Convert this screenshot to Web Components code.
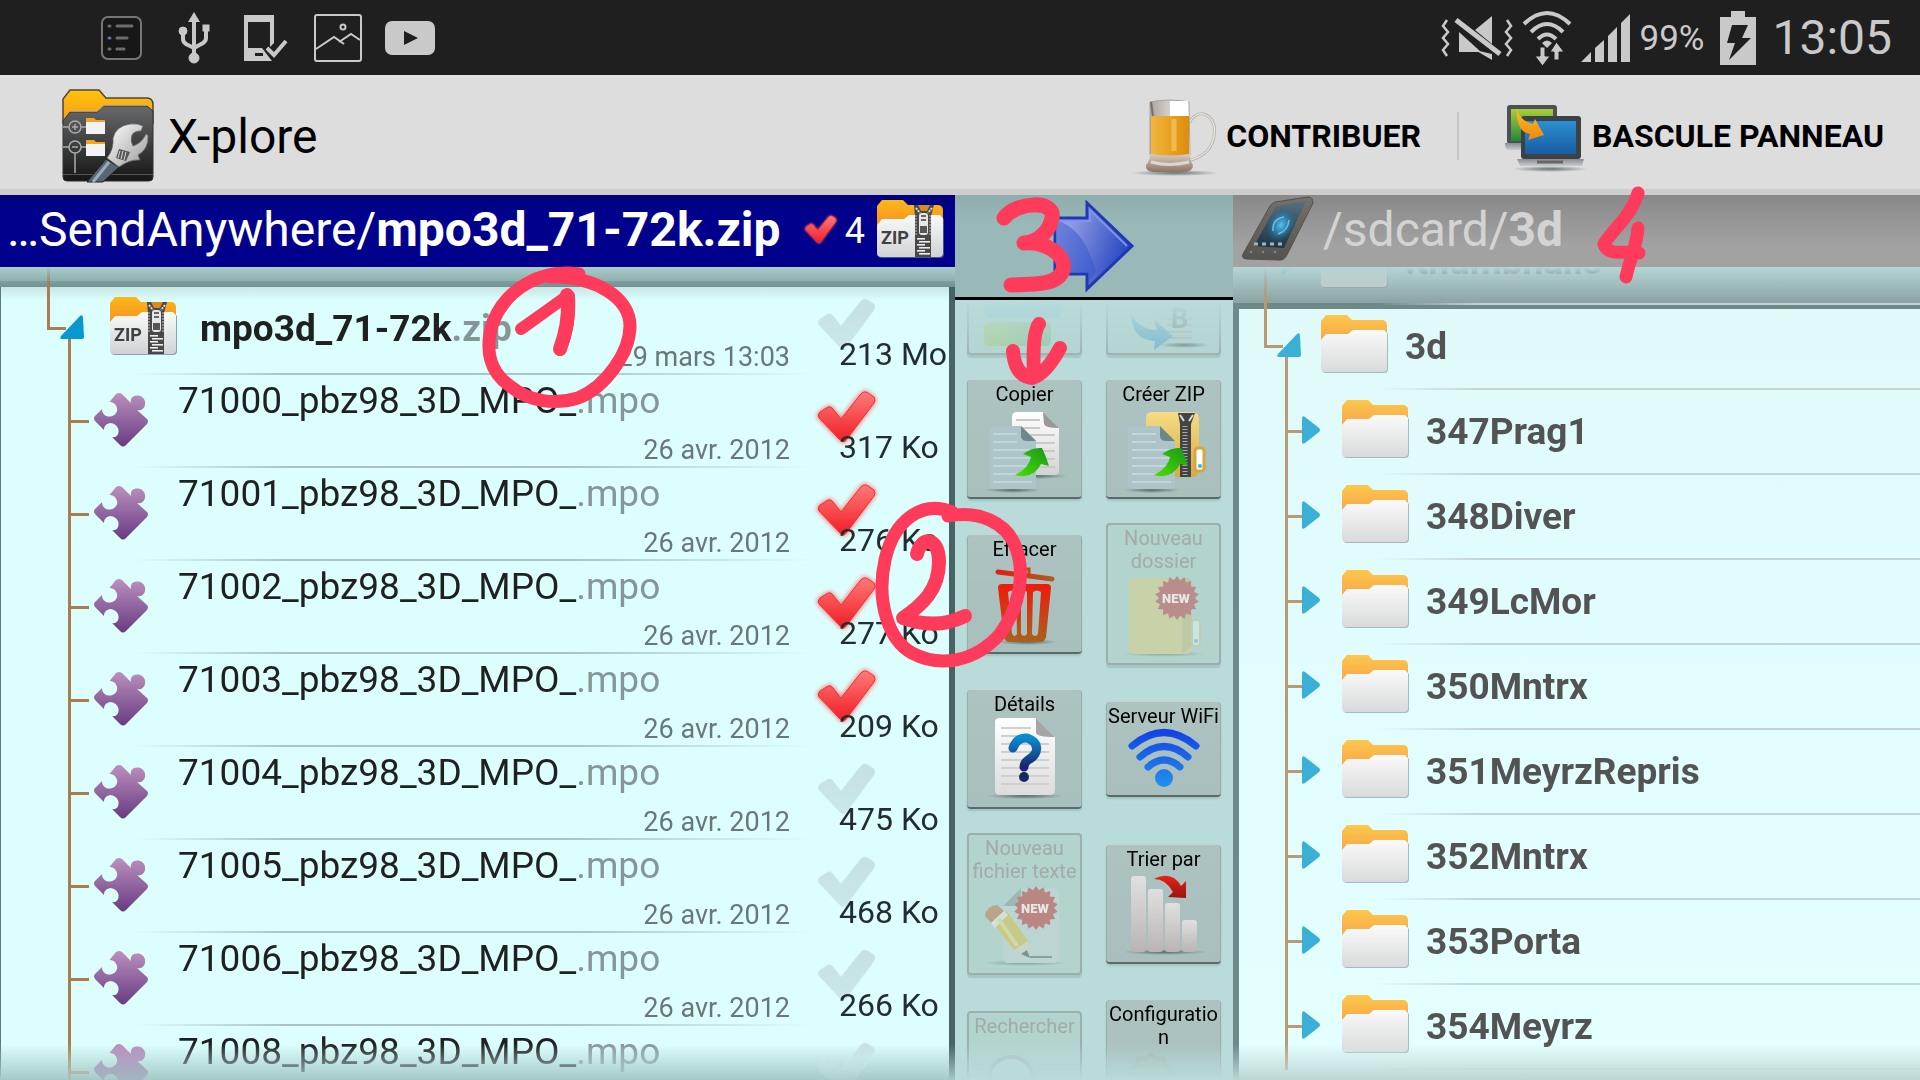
<!DOCTYPE html>
<html lang="fr">
<head>
<meta charset="utf-8">
<title>X-plore</title>
<style>
html,body{margin:0;height:100%}
body{font-family:Roboto,"Liberation Sans",sans-serif;overflow:hidden;background:#b9dcda}
</style>
</head>
<body>
<xp-app></xp-app>
<script>
const FOLDER_BACK='M0 26V6L5 0H26L31 5H62Q66 6 66 10V26Z';
const FOLDER_FRONT='M0 25L5 19H27L32 15H63L66 18V53Q66 57 62 57H4Q0 57 0 53Z';
const grad=(id,a,b,extra='x1="0" y1="0" x2="0" y2="1"')=>`<linearGradient id="${id}" ${extra}><stop offset="0" stop-color="${a}"/><stop offset="1" stop-color="${b}"/></linearGradient>`;
const starburst=(cx,cy,r1,r2,n)=>{let p='';for(let i=0;i<n*2;i++){const r=i%2?r2:r1,a=Math.PI*i/n;p+=(i?'L':'M')+(cx+r*Math.sin(a)).toFixed(1)+' '+(cy-r*Math.cos(a)).toFixed(1);}return p+'Z';};
const lines=(x,y,w,n,step,c)=>Array.from({length:n},(_,i)=>`<rect x="${x}" y="${y+i*step}" width="${w}" height="2" fill="${c}"/>`).join('');
const teeth=(y0,n,w1,w2,x)=>Array.from({length:n},(_,i)=>`<rect x="${i%2?x+2:x}" y="${y0+i*3}" width="${i%2?w2:w1}" height="1.6" fill="#eee"/>`).join('');
const shadow=(cx,cy,rx)=>`<ellipse cx="${cx}" cy="${cy}" rx="${rx}" ry="3" fill="url(#sh)"/>`;
const shDef='<radialGradient id="sh"><stop offset="0" stop-color="#3a5050" stop-opacity=".75"/><stop offset="1" stop-color="#3a5050" stop-opacity="0"/></radialGradient>';
const CHECK='M5 29Q3 26 6 23L14 18Q17 17 19 20L27 30L46 6Q50 1 54 4L60 8Q62 11 60 14L33 50Q30 55 26 51Z';
const copySheet=`<path d="M4 20Q4 16 8 16H36L51 31V75Q51 79 47 79H8Q4 79 4 75Z" fill="#adc4c8"/><path d="M36 16V27Q37 31 42 31H51Z" fill="#6e8889"/>${lines(8,23,24,2,8,'#c2d5d9')}${lines(8,39,39,5,8,'#c2d5d9')}`;
const greenArrow='<path d="M30 65Q44 58 46 47L38 44Q47 37 57 38Q61 46 64 56L56 54Q48 70 30 65Z" fill="url(#ga)"/>';
const ICONS={
list:[48,48,`<rect x="4" y="3" width="39" height="42" rx="6" fill="#171717" stroke="#777" stroke-width="2"/><g stroke="#6c6c6c" stroke-width="3" stroke-linecap="round"><path d="M19 12H34M19 24H29M19 35H26M11 12h1M11 35h1"/><path d="M11 24h1" stroke="#5577a5"/></g>`],
usb:[34,54,`<g fill="#c9c9c9" stroke="#c9c9c9"><path d="M17 1L23 11H11Z" stroke="none"/><path d="M17 10V46M6 20V28Q6 31 9 33L17 37M29 18V27Q29 30 26 32L17 37" fill="none" stroke-width="4"/><circle cx="6" cy="20" r="4"/><rect x="26" y="14" width="6" height="6"/><circle cx="17" cy="47" r="5"/></g>`],
phonecheck:[44,48,`<path d="M0 1H30V29L26 33V8H4V34H18L28 47H0Z" fill="#c9c9c9"/><rect x="11" y="39" width="8" height="3" fill="#1f1f1f"/><path d="M23 34L30 41L42 27" fill="none" stroke="#c9c9c9" stroke-width="4"/>`],
picture:[50,50,`<g fill="none" stroke="#c9c9c9" stroke-width="2"><rect x="2" y="2" width="46" height="46" rx="2"/><circle cx="30" cy="14" r="2.500"/><path d="M3 36L21 24L31 31M26 29L38 21L47 27"/></g>`],
youtube:[52,36,`<rect x="1" y="1" width="50" height="34" rx="7" fill="#c9c9c9"/><path d="M20 11V25L34 18Z" fill="#1f1f1f"/>`],
mute:[72,48,`<g fill="#c9c9c9"><path d="M18 18L40 38H28V38H18ZM34 16L51 2V30ZM34 36L51 40V46Z"/></g><path d="M15 6L59 40" stroke="#c9c9c9" stroke-width="5"/><path d="M6 6L2 12L7 18L2 24L7 30L2 36L6 42M66 6L70 12L65 18L70 24L65 30L70 36L66 42" fill="none" stroke="#c9c9c9" stroke-width="2.500"/>`],
wifiup:[52,56,`<g fill="none" stroke="#c9c9c9" stroke-width="4"><path d="M3 14Q26 -8 49 14"/><path d="M10 22Q26 6 42 22"/><path d="M17 29Q26 20 35 29"/></g><path d="M21 33Q26 28 31 33L26 38Z" fill="#c9c9c9"/><path d="M19 37h5v9h5L21.500 56L14 46h5ZM33 50h5V42h5L35.500 32L29 42h4Z" fill="#c9c9c9" stroke="#1f1f1f" stroke-width="1"/>`],
signal:[50,50,`<g fill="#c9c9c9"><path d="M0 49L10 39V49ZM14 49V35L23 27V49ZM27 49V23L36 14V49ZM40 49V10L49 1V49Z"/></g>`],
battery:[36,54,`<path d="M11 0H25V6H36V54H0V6H11Z" fill="#c9c9c9"/><path d="M12 14H28L22 27H31L9 49L15 32H7Z" fill="#1f1f1f"/>`],
app:[92,94,`<defs>${grad('o','#ffc40a','#f89a1c')}${grad('d','#67696b','#151515')}${grad('w','#fff','#9a9a9a','x1="0" y1="0" x2="1" y2="1"')}</defs><path d="M1 34V10L8 1H37L44 9H85Q91 9 91 16V34Z" fill="url(#o)" stroke="#49463f" stroke-width="1.500"/><path d="M1 32L8 23H35L42 17H85L91 22V88Q91 92 87 92H5Q1 92 1 88Z" fill="url(#d)" stroke="#333"/><path d="M8 22.500H35L42 16.500H85" fill="none" stroke="#999"/><g fill="none" stroke="#aaa" stroke-width="1.500"><circle cx="13" cy="38" r="6"/><circle cx="13" cy="58" r="6"/><path d="M1 38H7M19 38H24M1 58H7M19 58H24M13 64V84M10 38H16M13 35V41M10 58H16"/></g><path d="M1 85.500H91" stroke="#555"/><g><path d="M24 29h8l2 2h9v5H24zM24 51h8l2 2h9v5H24z" fill="#f8a320"/><path d="M24 33h19v12H24zM24 55h19v12H24z" fill="#f3f3f3"/></g><path d="M44 70L57 78L41 93H25Z" fill="#596575" stroke="#222"/><path d="M47 73L31 93" stroke="#9cabb8" stroke-width="3"/><path d="M45 69Q52 60 51 49Q54 37 68 35Q76 34 81 37L79 42Q72 42 70 46Q68 52 71 57Q80 54 84 45L86 46Q87 60 76 66L78 71Q68 70 57 78Z" fill="url(#w)" stroke="#666" stroke-width=".8"/><path d="M57 60L68 63L64 72L54 69Z" fill="#555"/><path d="M58 62L56 69M61 62L59 70M64 63L62 71" stroke="#ddd"/>`],
beer:[86,78,`<defs>${shDef}${grad('b','#f2b63c','#dc8d0c','x1="0" y1="0" x2="1" y2="0"')}${grad('g','#a9a49f','#fff','x1="0" y1="0" x2="1" y2="0"')}${grad('k','#d8cdc4','#8d7362')}</defs>${shadow(42,74,44)}<path d="M56 24Q62 13 71 15Q84 20 81 38Q78 55 58 61" fill="none" stroke="#bdb8b4" stroke-width="3"/><path d="M56 24Q62 13 71 15Q84 20 81 38Q78 55 58 61" fill="none" stroke="#f4f3f2" stroke-width="1"/><path d="M17 3Q36 -1 56 3L57 56H17Z" fill="url(#g)" stroke="#a8a39e"/><path d="M17 55H57Q57 62 60 66Q60 72 52 73H20Q12 72 13 66Q17 62 17 55Z" fill="url(#k)"/><path d="M18 17H56V55Q36 58 18 55Z" fill="url(#b)"/><path d="M18 3L20 17" stroke="#776f68" stroke-width="2"/><path d="M37 2H55V17H37Z" fill="#fff"/><path d="M41 20V52" stroke="#f9cf68" stroke-width="5" opacity=".6"/><path d="M18 63Q36 68 56 63" fill="none" stroke="#f3eeea" stroke-width="3" opacity=".7"/>`],
panels:[80,68,`<defs>${shDef}${grad('g','#a8cf3b','#24883c')}${grad('b','#2b8fd2','#195ca3')}${grad('o','#fbbf24','#f0850f')}${grad('m','#8a8d90','#c9cbcd')}</defs>${shadow(45,65,38)}<rect x="2" y="1" width="50" height="39" rx="3" fill="#4c5054"/><rect x="6" y="5" width="42" height="32" fill="url(#g)"/><path d="M0 39H20V46H3Q0 45 0 39Z" fill="url(#m)"/><rect x="16" y="12" width="60" height="43" rx="3" fill="#3c4146"/><rect x="20" y="17" width="51" height="33" fill="url(#b)"/><path d="M12 55H79L77 62H15Z" fill="url(#m)"/><path d="M32 58H58" stroke="#666" stroke-width="3"/><path d="M12 5Q16 18 28 20L30 15L39 31L23 36L25 30Q11 28 12 5Z" fill="url(#o)"/>`],
folder:[68,59,`<defs>${grad('o','#fcc84a','#f8a64c')}${grad('w','#fafafa','#d9dadb')}</defs><path d="${FOLDER_BACK}" fill="url(#o)"/><path d="${FOLDER_FRONT}" transform="translate(1 1)" fill="#8aa0a0" opacity=".7"/><path d="${FOLDER_FRONT}" fill="url(#w)"/>`],
zip:[68,59,`<defs>${grad('o','#fcb81a','#f8901e')}${grad('w','#fafafa','#d0d2d4')}</defs><path d="${FOLDER_BACK}" fill="url(#o)"/><path d="${FOLDER_FRONT}" transform="translate(1 1)" fill="#678" opacity=".7"/><path d="${FOLDER_FRONT}" fill="url(#w)"/><path d="M37 5H57L54 16V57H38V16Z" fill="#484848"/><path d="M41 5H53L50 11H44Z" fill="#d68a20"/><path d="M39 8l4 5M55 8l-4 5" stroke="#ddd" stroke-width="2" stroke-dasharray="2 1"/><path d="M39 15V36M53 15V36" stroke="#999" stroke-width="1.500" stroke-dasharray="2 1"/><rect x="42" y="13" width="9" height="22" rx="3" fill="#e6e6e6"/><rect x="43" y="26" width="7" height="7" fill="#555"/><path d="M44 16h5M44 20h5" stroke="#666" stroke-width="2"/>${teeth(38,6,8,11,40)}<text x="4" y="44" font-size="18" font-weight="700" fill="#414141">ZIP</text>`],
puzzle:[54,54,`<defs>${grad('p','#bb90bd','#683b82')}</defs><path d="M22 1Q25 -1 28 1L37 10C36 5 39 2 44 2.500C49 3 52 7 51 12C50 16 47 18 43 17L53 26Q55 28 53 31L32 52Q29 55 26 52L18 44C22 45 25 42 24.500 37C24 33 20 30 16 30C12 31 10 33 10 37L1 28Q-1 25 1 23L8 16C8 21 12 24 16 23.500C21 23 24 19 23 15C22 11 19 9 15.500 9Z" fill="url(#p)"/>`],
checkon:[66,58,`<defs>${grad('c','#ff7a78','#f01d25')}<filter id="f" x="-20%" y="-20%" width="140%" height="140%"><feGaussianBlur stdDeviation="2"/></filter></defs><path d="${CHECK}" fill="#ff5a5a" stroke="#ff5a5a" stroke-width="3" filter="url(#f)" opacity=".7"/><path d="${CHECK}" fill="url(#c)" stroke="#e2353b" stroke-width="1"/>`],
checkoff:[66,58,`<defs>${grad('c','#c5e1df','#c9e8e6')}</defs><path d="${CHECK}" fill="url(#c)" stroke="#cdebe9" stroke-width="1"/>`],
device:[72,65,`<defs>${grad('s','#56707f','#1c3443')}${grad('k','#75706c','#56524f')}<radialGradient id="l"><stop offset="0" stop-color="#56c4f4"/><stop offset=".5" stop-color="#2b86b8" stop-opacity=".7"/><stop offset="1" stop-color="#1f5f86" stop-opacity="0"/></radialGradient></defs><path d="M33 5L66 0Q71 0 71 6L45 58Q42 64 36 63L4 62Q-1 61 1 57L28 9Q30 6 33 5Z" fill="url(#k)" stroke="#54504e"/><path d="M34 9L64 4L42 51L12 49Z" fill="url(#s)"/><ellipse cx="39" cy="28" rx="14" ry="19" transform="rotate(28 39 28)" fill="url(#l)"/><path d="M31 34Q30 22 42 20M36 37Q46 34 47 23" fill="none" stroke="#7bd3f6" stroke-width="1.500" opacity=".8"/><path d="M12 47h4M20 47h4M28 47h4M36 47h4" stroke="#a8b4b8" stroke-width="3"/><path d="M8 55H34" stroke="#8b8783" stroke-dasharray="2 10" stroke-width="2"/>`],
bigarrow:[82,92,`<defs>${grad('a','#a9b2ec','#1f3fbd','x1="0" y1="0.200" x2="1" y2="0.600"')}</defs><path d="M2 18H34V3L79 46L34 89V74H2Z" fill="url(#a)" stroke="#2138b4" stroke-width="3"/><path d="M4 20Q32 30 43 72L36 80V72H4Z" fill="#3456cb" opacity=".5"/><path d="M5 21H37V10L74 46" fill="none" stroke="#7f93ea" stroke-width="2"/>`],
bars:[84,84,`<defs>${grad('b','#9ccbdc','#92c6dc')}${grad('g','#b0cf98','#93c5a8','x1="0" y1="0" x2="1" y2="0"')}</defs><rect x="1" y="28" width="77" height="26" rx="5" fill="url(#b)"/><rect x="1" y="58" width="67" height="24" rx="5" fill="url(#g)"/>`],
rename:[84,84,`<defs>${shDef}</defs><g opacity=".8">${shadow(62,81,26)}<path d="M30 22H70V79H30Z" fill="#b9cecc"/><path d="M45 55H70M45 61H70M45 68H70M45 74H70" stroke="#a5bbb9" stroke-width="2"/><text x="49" y="64" font-size="27" font-weight="700" fill="#7d9292">B</text><path d="M9 50Q18 66 35 66L32 56L51 72L32 86L33 77Q10 76 9 50Z" fill="#6aaed0"/></g>`],
copy:[84,84,`<defs>${shDef}${grad('w','#fff','#d3d3d3')}${grad('ga','#17961a','#4be000','x1="1" y1="0" x2="0" y2="1"')}</defs><g transform="translate(2 3)">${shadow(50,66,32)}${shadow(28,80,28)}<path d="M27 7Q27 2 32 2H58L74 18V61Q74 65 70 65H27Z" fill="url(#w)"/><path d="M58 2L59 14Q60 18 74 18Z" fill="#999"/>${lines(31,9,24,2,8,'#c9c9c9')}${lines(31,24,39,5,8,'#c9c9c9')}${copySheet}${greenArrow}</g>`],
createzip:[84,84,`<defs>${shDef}${grad('y','#f6dc84','#d8aa41')}${grad('ga','#17961a','#4be000','x1="1" y1="0" x2="0" y2="1"')}</defs><g transform="translate(2 3)">${shadow(28,80,28)}<path d="M22 8Q22 2 28 2H68Q75 2 75 9V60Q75 67 68 67H22Z" fill="url(#y)"/><rect x="71" y="38" width="9" height="23" rx="3" fill="#fff" stroke="#d3a93d" stroke-width="3"/><circle cx="76" cy="56" r="2" fill="#39aee8"/><path d="M54 3H71L67 14V67H56V14Z" fill="#444"/><path d="M61 16V66" stroke="#aaa" stroke-width="5" stroke-dasharray="1 2"/><path d="M56 5l4 6M69 5l-4 6" stroke="#ddd" stroke-width="2"/>${copySheet}${greenArrow}</g>`],
trash:[84,84,`<defs>${shDef}${grad('r','#ef1a0b','#a8621c')}${grad('t','#e2200e','#ad5c20','gradientUnits="userSpaceOnUse" x1="13" y1="0" x2="70" y2="0"')}</defs>${shadow(44,80,30)}<path d="M15 10L69 17" stroke="url(#t)" stroke-width="5" stroke-linecap="round"/><path d="M36 11V7H46V12" fill="none" stroke="#c5441b" stroke-width="3"/><path d="M15 26Q15 22 19 22H64Q68 22 68 26L63 75Q62 80 57 80H27Q22 80 21 75ZM25 30L29 72Q32 76 34 72L33 30Q29 27 25 30ZM38 30V72Q41 76 44 72V30Q41 27 38 30ZM50 30L49 72Q52 76 55 72L58 30Q54 27 50 30Z" fill="url(#r)" fill-rule="evenodd"/>`],
newfolder:[84,84,`<defs>${shDef}</defs><g opacity=".45">${shadow(42,80,42)}<rect x="7" y="4" width="62" height="76" rx="5" fill="#e2d27c"/><path d="M60 4H64Q70 4 70 10V72L60 80Z" fill="#c7bb76"/><rect x="70" y="46" width="8" height="26" rx="3" fill="#eef8f8" stroke="#d0c68c" stroke-width="2"/><circle cx="74" cy="67" r="2" fill="#59bfe0"/></g><path d="${starburst(55,24,22,18,18)}" fill="#b98d8b"/><text x="40" y="29" font-size="13" font-weight="900" fill="#e7e7e3">NEW</text>`],
newtext:[84,84,`<defs>${shDef}</defs><g opacity=".5">${shadow(42,79,42)}<path d="M20 22L38 4H70Q76 4 76 10V73Q76 79 70 79H25Q20 79 20 74Z" fill="#c6d8d7"/><path d="M20 22L38 4V22Z" fill="#86a09f"/><path d="M46 73H69" stroke="#59706f" stroke-width="2"/><path d="M9 38L24 27L45 57L47 74L31 66Z" fill="#d9c344"/><path d="M2 32Q3 22 14 21L21 27L8 39Z" fill="#bd784c"/><path d="M8 39L21 27L25 31L12 44Z" fill="#eee"/><path d="M16 35L34 62" stroke="#eee27b" stroke-width="4"/><path d="M31 66L45 57L47 74Z" fill="#dcd9c4"/><path d="M47 74L38 70L44 66Z" fill="#3f5555"/></g><path d="${starburst(53,24,22,18,18)}" fill="#b98683"/><text x="38" y="29" font-size="13" font-weight="900" fill="#e7e7e3">NEW</text>`],
details:[84,84,`<defs>${shDef}${grad('w','#fff','#dcdcdc')}${grad('q','#0b8bd0','#19246b')}</defs>${shadow(42,79,38)}<path d="M12 5Q12 1 17 1H53L72 20V73Q72 78 67 78H17Q12 78 12 73Z" fill="url(#w)"/><path d="M53 1V16Q54 20 72 20Z" fill="#a6a6a6"/>${lines(18,10,30,2,8,'#cfcfcf')}${lines(18,26,48,6,8,'#cfcfcf')}<path d="M30 31Q34 20 44 21Q56 25 53 35Q51 40 45 43Q41 46 41 50" fill="none" stroke="url(#q)" stroke-width="9" stroke-linecap="round"/><circle cx="41" cy="60" r="5" fill="#182765"/>`],
wifi:[84,60,`<defs>${grad('w','#133fe6','#2494ea','gradientUnits="userSpaceOnUse" x1="0" y1="0" x2="0" y2="60"')}</defs><g fill="none" stroke="url(#w)" stroke-width="7" stroke-linecap="round"><path d="M10 17Q42 -10 74 17"/><path d="M18 28Q42 7 66 28"/><path d="M26 38Q42 24 58 38"/></g><circle cx="42" cy="49" r="9" fill="url(#w)"/>`],
sort:[84,84,`<defs>${shDef}${grad('w','#e0e0e0','#b9b4b3')}${grad('r','#e52219','#9b130f')}</defs>${shadow(43,80,42)}<g fill="url(#w)"><rect x="9" y="4" width="15" height="76" rx="3"/><rect x="26" y="17" width="15" height="63" rx="3"/><rect x="43" y="31" width="15" height="49" rx="3"/><rect x="60" y="48" width="15" height="32" rx="3"/></g><path d="M32 7Q50 -2 59 14L64 9V26L46 25L51 20Q44 7 32 7Z" fill="url(#r)"/>`],
search:[84,84,`<circle cx="28" cy="40" r="22" fill="#c8e4e2" stroke="#a0b7b5" stroke-width="4" opacity=".5"/>`],
gear:[84,84,`<path d="${starburst(29,26,22,18,10)}" fill="#adbcba" stroke="#a5b5b3" stroke-width="4" stroke-linejoin="round" opacity=".8"/>`]
};
const root=(el,html)=>{el.attachShadow({mode:'open'}).innerHTML=html;};

class XpIcon extends HTMLElement{connectedCallback(){const [w,h,b]=ICONS[this.getAttribute('name')];const s=+this.getAttribute('scale')||1;
root(this,`<style>:host{display:block;flex:none}svg{display:block;overflow:visible}</style><svg width="${Math.round(w*s)}" height="${Math.round(h*s)}" viewBox="0 0 ${w} ${h}" aria-hidden="true">${b}</svg>`);}}
customElements.define('xp-icon',XpIcon);

class XpStatus extends HTMLElement{connectedCallback(){root(this,`<style>
:host{display:flex;justify-content:space-between;align-items:center;height:75px;background:#1f1f1f;color:#c9c9c9;padding:0 28px 0 86px}
div{display:flex;align-items:center}.l{display:grid;grid-template-columns:repeat(5,72px);justify-items:center}.r{gap:8px}.p{font-size:35px;padding-top:2px}.t{font-size:48px;margin-left:8px}.b{margin-left:8px}
</style><div class="l"><xp-icon name="list"></xp-icon><xp-icon name="usb"></xp-icon><xp-icon name="phonecheck"></xp-icon><xp-icon name="picture"></xp-icon><xp-icon name="youtube"></xp-icon></div>
<div class="r"><xp-icon name="mute"></xp-icon><xp-icon name="wifiup"></xp-icon><xp-icon name="signal"></xp-icon><span class="p">99%</span><xp-icon class="b" name="battery"></xp-icon><span class="t">13:05</span></div>`);}}
customElements.define('xp-status',XpStatus);

class XpToolbar extends HTMLElement{connectedCallback(){root(this,`<style>
:host{display:flex;align-items:center;height:120px;background:#ddd;box-shadow:inset 0 -6px #cdcdcd,inset 0 3px #e2e2e2;padding:2px 36px 0 62px;box-sizing:border-box}
h1{font-size:48px;font-weight:400;margin:0 auto 0 14px;color:#000}
button{all:unset;display:flex;align-items:center;gap:7px;font-size:32px;font-weight:700;color:#000}
button xp-icon{padding-top:4px}
i{width:2px;height:48px;background:#c4c4c4;margin:0 46px 0 36px}
</style><xp-icon name="app"></xp-icon><h1>X-plore</h1><button><xp-icon name="beer"></xp-icon>CONTRIBUER</button><i></i><button><xp-icon name="panels"></xp-icon>BASCULE PANNEAU</button>`);}}
customElements.define('xp-toolbar',XpToolbar);

class XpFile extends HTMLElement{connectedCallback(){
const a=n=>this.getAttribute(n),isRoot=this.hasAttribute('root'),on=this.hasAttribute('on');
const guide=isRoot?`<svg width="110" height="93"><path d="M47 -15H50V45H66V48H47ZM68 56H71V93H68Z" fill="#a87d4f"/><path d="M61 54L80 34Q83 32 83 36L84 55Q84 57 82 57L62 57Q59 57 61 54Z" fill="#0698cf"/></svg>`:`<svg width="94" height="93"><path d="M68 0H71V45H89V48H71V93H68Z" fill="#a87d4f"/></svg>`;
root(this,`<style>
:host{display:flex;height:93px;position:relative;background:linear-gradient(90deg,transparent 14%,#a9c4c2 30%,#a9c4c2 60%,transparent 85%) 0 100%/100% 2px no-repeat}
svg{flex:none;display:block;overflow:visible}
.ic{padding-top:${isRoot?15:18}px;width:${isRoot?90:84}px;flex:none}
.body{flex:1;min-width:0;display:flex;flex-direction:column;justify-content:space-between;box-sizing:border-box;padding:5px 24px 2px 0}
.body.r{padding-top:26px}.body.r .d{margin-top:-10px}
.n{font-size:37px;line-height:42px;color:#1f2020;white-space:nowrap;font-weight:${isRoot?700:400}}
.n span{color:#849796}
.d{font-size:27px;line-height:32px;color:#697776;text-align:right}
.m{display:grid;width:141px;flex:none}
.m>*{grid-area:1/1}
label{display:block;padding-top:14px}
input{position:absolute;opacity:0;margin:0;width:64px;height:58px}
.s{align-self:end;font-size:32px;line-height:38px;padding:0 0 2px 25px;color:#222d2d;white-space:nowrap;pointer-events:none}
</style>${guide}<div class="ic"><xp-icon name="${isRoot?'zip':'puzzle'}"></xp-icon></div>
<div class="body ${isRoot?'r':''}"><div class="n" id="n">${a('name')}<span>${a('ext')}</span></div><div class="d">${a('date')}</div></div>
<div class="m"><label><input type="checkbox" aria-labelledby="n" ${on?'checked':''}><xp-icon name="${on?'checkon':'checkoff'}"></xp-icon></label><div class="s">${a('size')}</div></div>`);}}
customElements.define('xp-file',XpFile);

class XpDir extends HTMLElement{connectedCallback(){
const k=this.getAttribute('kind');
const guide=k==='root'?`<svg width="88" height="85"><path d="M31 0H34V40H50V43H31ZM52 50H55V85H52Z" fill="#b89a74"/><path d="M45 49L64 29Q67 27 67 31L68 50Q68 52 66 52L46 52Q43 52 45 49Z" fill="#3bb0d6"/></svg>`
:k==='prev'?`<svg width="88" height="85"><path d="M31 0H34V85H31Z" fill="#b89a74"/><path d="M48 29Q48 26 51 27L65 39Q67 40 65 42L51 54Q48 55 48 52Z" fill="#3bb0d6"/></svg>`
:`<svg width="109" height="85"><path d="M52 0H55V40H70V43H55V85H52Z" fill="#b89a74"/><path d="M69 29Q69 25 72 27L86 38Q88 40 86 42L72 53Q69 55 69 52Z" fill="#3bb0d6"/></svg>`;
root(this,`<style>
:host{display:flex;height:85px;background:linear-gradient(90deg,transparent 21%,#c3d4d2 36%,#c3d4d2) 0 100%/100% 2px no-repeat}
svg{flex:none}.ic{padding-top:10px;width:84px;flex:none}
.n{align-self:center;padding-bottom:2px;font-size:37px;line-height:42px;font-weight:700;color:#535353;white-space:nowrap}
</style>${guide}<div class="ic"><xp-icon name="folder"></xp-icon></div><div class="n"><slot></slot></div>`);}}
customElements.define('xp-dir',XpDir);

class XpTool extends HTMLElement{connectedCallback(){
const off=this.hasAttribute('off');
root(this,`<style>
:host{display:block}
button{all:unset;box-sizing:border-box;width:100%;display:flex;flex-direction:column;align-items:center;padding:3px 2px 6px;border-radius:4px;background:linear-gradient(#acc3c1,#a9bfbd);border-top:1px solid #c6d6d4;border-bottom:2px solid #586b6a;box-shadow:inset 1px 0 #98acab,inset -1px 0 #98acab,0 2px 2px #a4c2c0;text-align:center}
button:disabled{background:#b3d3cf;border:2px solid #9bafad;padding:2px 0 5px;box-shadow:0 3px 1px #a6c6c4}
span{font-size:20px;line-height:23px;min-height:23px;color:#000;overflow-wrap:anywhere}
button:disabled span{color:#a2abaa}
xp-icon{padding-top:1px}
</style><button ${off?'disabled':''}><span><slot></slot></span><xp-icon name="${this.getAttribute('icon')}"></xp-icon></button>`);}}
customElements.define('xp-tool',XpTool);

class XpPane extends HTMLElement{connectedCallback(){root(this,`<style>
:host{display:flex;flex-direction:column;min-width:0;min-height:0}
header{display:flex;align-items:center;height:72px;flex:none;box-sizing:border-box;font-size:48px;white-space:nowrap;padding-bottom:3px}
.list{flex:1;min-height:0;overflow:hidden;position:relative}
:host([side=left]) header{background:linear-gradient(#000078,#00008c 20%);color:#fff;padding-left:7px;padding-right:10px}
:host([side=right]) header{background:linear-gradient(#898989,#a2a2a2 70%);color:#d3d3d3;padding-left:9px}
:host([side=left]) .list{background:
linear-gradient(transparent,#a5c9c6) 0 100%/100% 36px no-repeat,
linear-gradient(#a9cdc9,#8fb1ae 14px,#7f9f9d 14px,#6f9290 20px) 0 0/100% 20px no-repeat,
linear-gradient(#456463,#456463) 100% 0/6px 100% no-repeat,
linear-gradient(#5c7b7a,#5c7b7a) 0 0/1px 100% no-repeat,
linear-gradient(#c7e6e4,#dcfffe 14px) 0 20px/100% 100% no-repeat,#dcfffe}
:host([side=right]) .list{background:
linear-gradient(transparent,#bcd6d3) 0 100%/100% 36px no-repeat,
linear-gradient(#b6d5d5,#8ba3a2 36px,#6f8988 36px,#6f8988) 0 0/100% 42px no-repeat,
linear-gradient(#6f8988,#6f8988) 0 0/6px 100% no-repeat,linear-gradient(#e0fafa,#e3ffff)}
.rows{height:100%;overflow:hidden;box-sizing:border-box;display:flow-root}
:host([side=left]) .rows{padding-top:15px;-webkit-mask:linear-gradient(transparent,#000 20px,#000 calc(100% - 36px),rgba(0,0,0,.15))}
:host([side=right]) .rows{-webkit-mask:linear-gradient(transparent,#000 34px,#000 calc(100% - 36px),rgba(0,0,0,.15))}
:host([side=right]) .in{margin-top:-47px}
</style><header><slot name="head"></slot></header><div class="list"><div class="rows"><div class="in"><slot></slot></div></div></div>`);}}
customElements.define('xp-pane',XpPane);

class XpTools extends HTMLElement{connectedCallback(){root(this,`<style>
:host{display:flex;flex-direction:column;background:#b9dcda;min-height:0}
.go{all:unset;display:flex;justify-content:center;align-items:center;height:102px;flex:none;background:linear-gradient(#8fadad,#99b9b8 30%)}
.v{flex:1;min-height:0;overflow:hidden;border-top:3px solid #000}
.m{height:100%;overflow:hidden;-webkit-mask:linear-gradient(transparent,#000 60px,#000 calc(100% - 36px),transparent)}
.g{display:grid;grid-template-columns:1fr 1fr;gap:24px;align-items:center;padding:0 12px;margin-top:-64px}
</style><button class="go"><xp-icon name="bigarrow"></xp-icon></button><div class="v"><div class="m"><div class="g"><slot></slot></div></div></div>`);}}
customElements.define('xp-tools',XpTools);

class XpMarks extends HTMLElement{connectedCallback(){root(this,`<style>:host{position:absolute;inset:0;pointer-events:none}svg{display:block;width:100%;height:100%}</style>
<svg viewBox="0 0 1920 1080" fill="none" stroke="#ff3b5c" stroke-width="13" stroke-linecap="round" stroke-linejoin="round" aria-hidden="true">
<path d="M579 274C540 268 506 290 493 322C484 350 490 372 510 386C530 402 555 405 578 398C606 387 630 352 630 326C630 298 596 276 550 277"/>
<path d="M521 329Q545 312 567 296M569 296Q571 325 560 350" stroke-width="12"/><path d="M567 295L568 300Q569 325 560 349" stroke-width="14"/>
<path d="M952 512C922 500 894 520 885 560C876 600 888 640 912 653C940 668 975 662 1000 634C1018 610 1026 575 1016 548C1007 522 978 510 948 516"/>
<path stroke-width="14" d="M917 554C921 536 939 536 939 562C939 590 922 605 903 618C925 626 945 626 965 616"/>
<path stroke-width="15" d="M1004 218C1017 201 1056 200 1052 218C1050 231 1037 243 1024 243C1045 241 1067 255 1063 270C1058 286 1032 284 1011 285"/>
<path stroke-width="14" d="M1039 324Q1032 334 1034 376M1013 351Q1015 376 1032 378Q1046 374 1060 348"/>
<path d="M1638 193C1631 217 1612 230 1604 244C1608 257 1625 250 1639 253M1638 228C1637 245 1629 262 1626 277"/>
</svg>`);}}
customElements.define('xp-marks',XpMarks);

class XpApp extends HTMLElement{connectedCallback(){
const files=[['71000','317 Ko',1],['71001','276 Ko',1],['71002','277 Ko',1],['71003','209 Ko',1],['71004','475 Ko',0],['71005','468 Ko',0],['71006','266 Ko',0],['71008','',0]];
const dirs=['347Prag1','348Diver','349LcMor','350Mntrx','351MeyrzRepris','352Mntrx','353Porta','354Meyrz'];
root(this,`<style>
:host{display:flex;flex-direction:column;height:100vh;position:relative}
main{flex:1;min-height:0;display:grid;grid-template-columns:minmax(0,955fr) 278px minmax(0,687fr);grid-template-rows:minmax(0,1fr)}
.path{flex:1}.dev{margin-left:9px}.ck{margin-right:6px}.cnt{font-size:36px;margin-right:12px;padding-top:3px}
</style><xp-status></xp-status><xp-toolbar></xp-toolbar><main>
<xp-pane side="left"><span slot="head" class="path">…SendAnywhere/<b>mpo3d_71-72k.zip</b></span><xp-icon slot="head" class="ck" name="checkon" scale="0.550"></xp-icon><span slot="head" class="cnt">4</span><xp-icon slot="head" name="zip"></xp-icon>
<xp-file root name="mpo3d_71-72k" ext=".zip" date="29 mars 13:03" size="213 Mo"></xp-file>
${files.map(([n,s,c])=>`<xp-file name="${n}_pbz98_3D_MPO_" ext=".mpo" date="${s?'26 avr. 2012':''}" size="${s}" ${c?'on':''}></xp-file>`).join('')}</xp-pane>
<xp-tools><xp-tool off icon="bars"></xp-tool><xp-tool off icon="rename"></xp-tool><xp-tool icon="copy">Copier</xp-tool><xp-tool icon="createzip">Créer ZIP</xp-tool><xp-tool icon="trash">Effacer</xp-tool><xp-tool off icon="newfolder">Nouveau dossier</xp-tool><xp-tool icon="details">Détails</xp-tool><xp-tool icon="wifi">Serveur WiFi</xp-tool><xp-tool off icon="newtext">Nouveau fichier texte</xp-tool><xp-tool icon="sort">Trier par</xp-tool><xp-tool off icon="search">Rechercher</xp-tool><xp-tool icon="gear">Configuration</xp-tool></xp-tools>
<xp-pane side="right"><xp-icon slot="head" name="device"></xp-icon><span slot="head" class="dev">/sdcard/<b>3d</b></span>
<xp-dir kind="prev">.thumbnails</xp-dir><xp-dir kind="root">3d</xp-dir>${dirs.map(d=>`<xp-dir>${d}</xp-dir>`).join('')}</xp-pane>
</main><xp-marks></xp-marks>`);}}
customElements.define('xp-app',XpApp);
</script>
</body>
</html>
